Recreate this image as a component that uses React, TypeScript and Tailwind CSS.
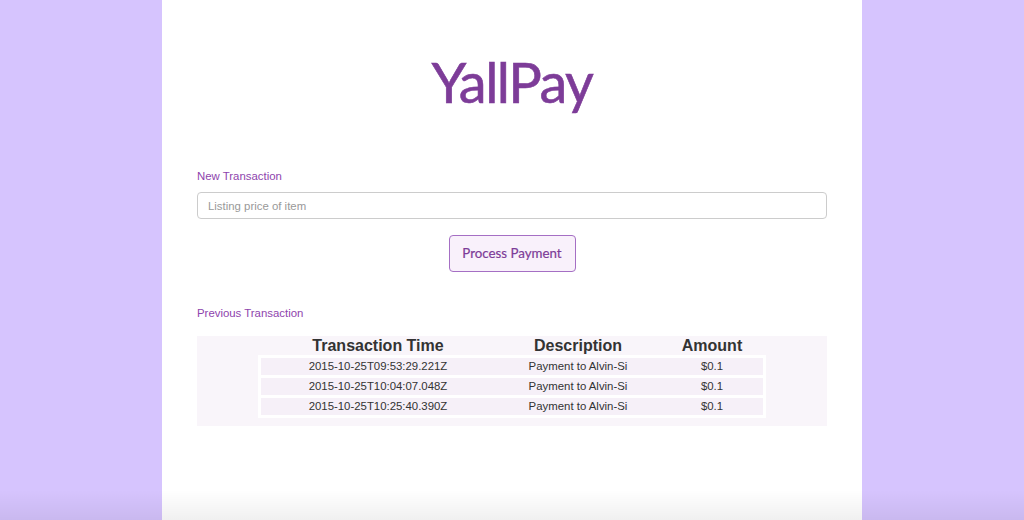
import React from 'react';

const rows = [
  { time: '2015-10-25T09:53:29.221Z', desc: 'Payment to Alvin-Si', amount: '$0.1' },
  { time: '2015-10-25T10:04:07.048Z', desc: 'Payment to Alvin-Si', amount: '$0.1' },
  { time: '2015-10-25T10:25:40.390Z', desc: 'Payment to Alvin-Si', amount: '$0.1' },
];

export default function App() {
  return (
    <div className="relative h-[520px] overflow-hidden bg-[#d6c4fe] font-['Liberation_Sans',Arial,sans-serif]">
      <div className="mx-auto h-full w-[700px] bg-white px-[35px] pt-[50px]">
        {/* Logo */}
        <h1 className="text-center font-['Lato',sans-serif] text-[56px] leading-[64px] tracking-[-1.5px] text-[#7d3c98] [-webkit-text-stroke:0.6px_#7d3c98]">
          YallPay
        </h1>

        {/* New transaction */}
        <div className="mt-[55px]">
          <label className="block text-[11.4px] leading-[14px] text-[#8e44ad]">New Transaction</label>
          <input
            className="mt-[9px] block h-[27px] w-full rounded-[4px] border border-[#cccccc] px-[10px] text-[11.4px] text-[#555] placeholder:text-[#999] outline-none"
            placeholder="Listing price of item"
          />
          <div className="mt-[16px] flex justify-center">
            <button className="h-[37px] w-[127px] rounded-[4px] border border-[#a56fc4] bg-[#f9f1fb] font-['Lato',sans-serif] text-[13.3px] text-[#7d3c98] [-webkit-text-stroke:0.2px_#7d3c98]">
              Process Payment
            </button>
          </div>
        </div>

        {/* Previous transactions */}
        <div className="mt-[34px]">
          <div className="text-[11.4px] leading-[14px] text-[#8e44ad]">Previous Transaction</div>
          <div className="mt-[16px] flex justify-center bg-[#f9f5fa] pb-[8px]">
            <div className="w-[508px]">
              <div className="grid h-[19px] grid-cols-[234px_166px_102px] px-[3px] text-[16px] font-bold leading-[19px] text-[#333]">
                <div className="text-center">Transaction Time</div>
                <div className="text-center">Description</div>
                <div className="text-center">Amount</div>
              </div>
              <div className="flex flex-col gap-[3px] bg-white p-[3px]">
                {rows.map((r) => (
                  <div
                    key={r.time}
                    className="grid h-[17px] grid-cols-[234px_166px_102px] items-center bg-[#f6f0f8] text-[11.4px] leading-[17px] text-[#333]"
                  >
                    <div className="text-center">{r.time}</div>
                    <div className="text-center">{r.desc}</div>
                    <div className="text-center">{r.amount}</div>
                  </div>
                ))}
              </div>
            </div>
          </div>
        </div>
      </div>

      {/* window bottom shade */}
      <div className="pointer-events-none absolute bottom-0 left-0 h-[30px] w-full bg-gradient-to-b from-transparent to-black/[0.06]" />
    </div>
  );
}
